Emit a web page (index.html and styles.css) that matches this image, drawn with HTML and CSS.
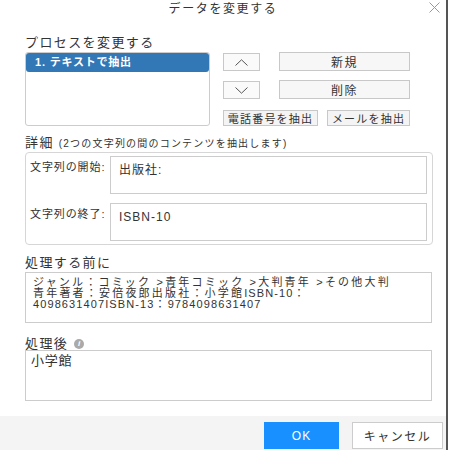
FILE: index.html
```html
<!DOCTYPE html>
<html lang="ja">
<head>
<meta charset="utf-8">
<link rel="stylesheet" href="styles.css">
</head>
<body>
<div class="dialog">
  <div class="header">
    <div class="title">データを変更する</div>
    <svg class="close" width="11" height="11" viewBox="0 0 11 11"><path d="M0.5 0.5L10.5 10.5M10.5 0.5L0.5 10.5" stroke="#999" stroke-width="1" fill="none"/></svg>
  </div>
  <div class="content">
    <div class="label big">プロセスを変更する</div>
    <div class="process">
      <div class="list">
        <div class="item sel">1. テキストで抽出</div>
      </div>
      <div class="tools">
        <div class="btn arrow"><svg width="13" height="7" viewBox="0 0 13 7"><path d="M0.5 6.5L6.5 0.8L12.5 6.5" stroke="#555" fill="none"/></svg></div>
        <div class="btn wide">新規</div>
        <div class="btn arrow"><svg width="13" height="7" viewBox="0 0 13 7"><path d="M0.5 0.5L6.5 6.2L12.5 0.5" stroke="#555" fill="none"/></svg></div>
        <div class="btn wide">削除</div>
        <div class="smallrow">
          <div class="btn small phone">電話番号を抽出</div>
          <div class="btn small mail">メールを抽出</div>
        </div>
      </div>
    </div>
    <div class="label big detail-label">詳細 <span class="hint">(2つの文字列の間のコンテンツを抽出します)</span></div>
    <div class="detail">
      <div class="drow">
        <div class="dlabel">文字列の開始:</div>
        <div class="dinput">出版社:</div>
      </div>
      <div class="drow">
        <div class="dlabel">文字列の終了:</div>
        <div class="dinput">ISBN-10</div>
      </div>
    </div>
    <div class="label big sec">処理する前に</div>
    <div class="area before">ジャンル：コミック &gt;青年コミック &gt;大判青年 &gt;その他大判<br>青年著者：安倍夜郎出版社：小学館<span class="lat">ISBN-10</span>：<br><span class="lat">4098631407ISBN-13</span>：<span class="lat">9784098631407</span></div>
    <div class="label big sec after-label">処理後 <span class="info">i</span></div>
    <div class="area after">小学館</div>
  </div>
  <div class="footer">
    <div class="fbtn ok">OK</div>
    <div class="fbtn cancel">キャンセル</div>
  </div>
</div>
</body>
</html>
```
FILE: styles.css
```css
html, body {
  margin: 0;
  padding: 0;
  background: #fff;
}
body {
  width: 450px;
  height: 450px;
  overflow: hidden;
  font-family: "Liberation Sans", "Noto Sans CJK JP", sans-serif;
  color: #333;
}
.dialog {
  width: 446px;
  height: 450px;
  border-right: 2px solid #555;
  display: flex;
  flex-direction: column;
  position: relative;
}
.header {
  height: 24px;
  display: flex;
  justify-content: center;
  align-items: flex-start;
}
.title {
  font-size: 12px;
  letter-spacing: 1.6px;
  line-height: 18px;
  color: #333;
}
.close {
  position: absolute;
  top: 2px;
  right: 6px;
}
.content {
  padding: 11px 0 0 25px;
  flex: 1;
  display: flex;
  flex-direction: column;
}
.label.big {
  font-size: 13px;
  letter-spacing: 1.4px;
  line-height: 16px;
  height: 16px;
  color: #333;
}
.process {
  display: flex;
  margin-top: 1px;
}
.list {
  width: 183px;
  height: 72px;
  border: 1px solid #ccc;
  border-radius: 3px;
}
.item.sel {
  background: #3277b6;
  color: #fff;
  font-size: 11px;
  letter-spacing: 0.8px;
  line-height: 19px;
  height: 19px;
  padding-left: 9px;
  border-radius: 3px;
  font-weight: bold;
}
.tools {
  margin-left: 13px;
  width: 188px;
  display: grid;
  grid-template-columns: 37px 131px;
  column-gap: 19px;
  row-gap: 9px;
  align-content: start;
}
.btn {
  box-sizing: border-box;
  height: 19px;
  border: 1px solid #c8c8c8;
  background: #f7f7f7;
  display: flex;
  align-items: center;
  justify-content: center;
  font-size: 12px;
  letter-spacing: 1.4px;
  color: #333;
}
.btn.arrow {
  margin-top: 1px;
  height: 18px;
  background: #fafafa;
}
.smallrow {
  grid-column: 1 / 3;
  display: flex;
  gap: 9px;
  margin-top: 2px;
}
.btn.small {
  height: 16px;
  font-size: 11px;
  letter-spacing: 1.2px;
  background: #f4f4f4;
}
.btn.phone { width: 95px; }
.btn.mail { width: 83px; }
.detail-label {
  margin-top: 9px;
}
.hint {
  font-size: 10px;
  letter-spacing: 1.2px;
}
.detail {
  margin-top: 1px;
  width: 408px;
  box-sizing: border-box;
  height: 93px;
  border: 1px solid #d6d6d6;
  border-radius: 4px;
  padding: 3px 5px 0 4px;
  display: flex;
  flex-direction: column;
  gap: 9px;
}
.drow {
  display: flex;
}
.dlabel {
  width: 80px;
  font-size: 11px;
  letter-spacing: 0.9px;
  line-height: 16px;
  padding-top: 3px;
}
.dinput {
  box-sizing: border-box;
  width: 317px;
  height: 38px;
  border: 1px solid #ccc;
  font-size: 12px;
  letter-spacing: 1px;
  padding: 5px 0 0 8px;
  line-height: 16px;
}
.sec {
  margin-top: 10px;
}
.area {
  box-sizing: border-box;
  width: 407px;
  height: 51px;
  border: 1px solid #ccc;
  margin-top: 1px;
  padding: 4px 0 0 7px;
  font-size: 11px;
  letter-spacing: 2.2px;
  line-height: 11px;
}
.lat {
  letter-spacing: 1.1px;
}
.after-label {
  margin-top: 13px;
  display: flex;
  align-items: center;
  gap: 6px;
}
.area.after {
  margin-top: -2px;
  font-size: 13px;
  letter-spacing: 0.8px;
  line-height: 16px;
  padding: 2px 0 0 5px;
}
.info {
  display: inline-flex;
  width: 10px;
  height: 10px;
  border-radius: 50%;
  background: #aaa;
  color: #fff;
  font-size: 8px;
  font-style: italic;
  font-weight: bold;
  align-items: center;
  justify-content: center;
  letter-spacing: 0;
  line-height: 10px;
}
.footer {
  height: 34px;
  background: #f4f4f4;
  display: flex;
  justify-content: flex-end;
  align-items: flex-start;
  padding: 6px 3px 0 0;
  box-sizing: border-box;
  gap: 13px;
}
.fbtn {
  box-sizing: border-box;
  height: 27px;
  display: flex;
  align-items: center;
  justify-content: center;
  font-size: 12px;
  letter-spacing: 1.2px;
}
.ok {
  width: 75px;
  background: #1890ff;
  color: #fff;
}
.cancel {
  width: 91px;
  background: #fff;
  border: 1px solid #ccc;
  color: #333;
  letter-spacing: 1.5px;
}
```
